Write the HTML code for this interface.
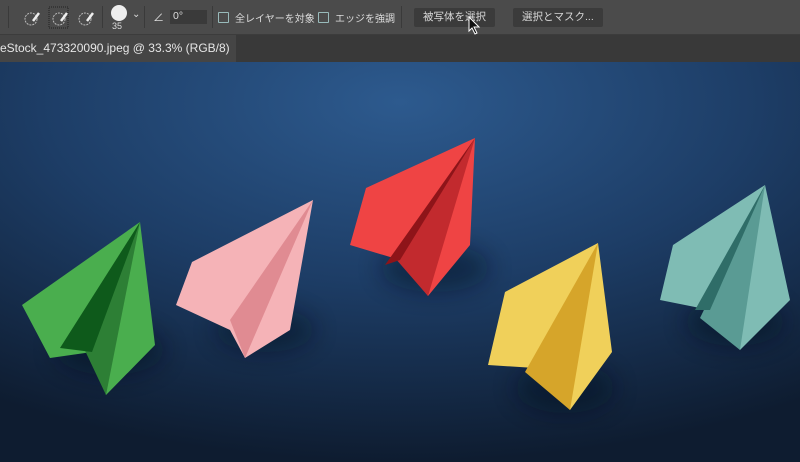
<!DOCTYPE html>
<html><head><meta charset="utf-8"><style>
body{margin:0;width:800px;height:462px;overflow:hidden;background:#383838;font-family:"Liberation Sans","Noto Sans CJK JP",sans-serif;position:relative}
.tb{position:absolute;left:0;top:0;width:800px;height:34px;background:#4b4b4b;border-bottom:1px solid #3c3c3c}
.t{position:absolute;color:#dcdcdc;font-size:10.5px;white-space:nowrap}
.btn{position:absolute;top:8px;height:19px;background:#3b3b3b;color:#d8d8d8;font-size:10.5px;line-height:19px;padding:0 9px;border-radius:2px;white-space:nowrap}
.cb{position:absolute;top:12px;width:9px;height:9px;border:1px solid #9bb;border-radius:1px}
.tabs{position:absolute;top:35px;left:0;width:800px;height:27px;background:#393939}
.tab{position:absolute;left:0;top:0;width:236px;height:27px;background:#454545;color:#e6e6e6;font-size:12px;line-height:27px;white-space:nowrap;overflow:hidden}
.img{position:absolute;top:62px;left:0;width:800px;height:400px}
</style></head><body>
<div class="tb">
<div style="position:absolute;left:8px;top:6px;width:1px;height:22px;background:#3a3a3a"></div>
<svg style="position:absolute;left:20px;top:4px" width="80" height="26"><g fill="none" stroke="#bbb" stroke-width="1" stroke-dasharray="2 1"><circle cx="11" cy="15" r="6"/><circle cx="39" cy="15" r="6"/><circle cx="65" cy="15" r="6"/></g><g stroke="#eee" stroke-width="2.5"><line x1="13" y1="17" x2="19" y2="9"/><line x1="41" y1="17" x2="47" y2="9"/><line x1="67" y1="17" x2="73" y2="9"/></g><rect x="29" y="3" width="19" height="21" fill="none" stroke="#222" stroke-dasharray="1 1"/></svg>
<div style="position:absolute;left:102px;top:6px;width:1px;height:22px;background:#3a3a3a"></div>
<div style="position:absolute;left:111px;top:5px;width:16px;height:16px;border-radius:50%;background:#eee"></div>
<div class="t" style="left:112px;top:21px;font-size:9px">35</div>
<div class="t" style="left:132px;top:9px;font-size:10px">⌄</div>
<div style="position:absolute;left:144px;top:6px;width:1px;height:22px;background:#3a3a3a"></div>
<div class="t" style="left:153px;top:9px;font-size:11px">∠</div>
<div style="position:absolute;left:170px;top:10px;width:37px;height:14px;background:#3a3a3a"></div>
<div class="t" style="left:173px;top:10px">0°</div>
<div style="position:absolute;left:212px;top:6px;width:1px;height:22px;background:#3a3a3a"></div>
<div class="cb" style="left:218px"></div><div class="t" style="left:235px;top:10px;font-size:10px">全レイヤーを対象</div>
<div class="cb" style="left:318px"></div><div class="t" style="left:335px;top:10px;font-size:10px">エッジを強調</div>
<div style="position:absolute;left:401px;top:6px;width:1px;height:22px;background:#3a3a3a"></div>
<div class="btn" style="left:414px">被写体を選択</div>
<div class="btn" style="left:513px">選択とマスク...</div>
<svg style="position:absolute;left:468px;top:16px" width="14" height="20"><path d="M1 1 L1 15 L4 12 L7 18 L9 17 L6 11 L11 11 Z" fill="#111" stroke="#fff" stroke-width="1"/></svg>
</div>
<div class="tabs"><div class="tab">eStock_473320090.jpeg @ 33.3% (RGB/8)</div></div>
<svg class="img" viewBox="0 62 800 400" width="800" height="400">
<defs><radialGradient id="bg" cx="0.5" cy="0.1" r="0.9"><stop offset="0" stop-color="#2d5a8e"/><stop offset="0.5" stop-color="#1d3d66"/><stop offset="1" stop-color="#0e1c30"/></radialGradient>
<filter id="bl"><feGaussianBlur stdDeviation="12"/></filter></defs>
<rect x="0" y="62" width="800" height="400" fill="url(#bg)"/>
<g opacity="0.45" fill="#05101e" filter="url(#bl)"><ellipse cx="110" cy="350" rx="55" ry="25"/><ellipse cx="265" cy="330" rx="50" ry="22"/><ellipse cx="435" cy="268" rx="55" ry="24"/><ellipse cx="565" cy="388" rx="50" ry="25"/><ellipse cx="735" cy="322" rx="50" ry="24"/></g>
<polygon points="140,222 22,305 50,358 92,352 106,395 155,345" fill="#4aae4e"/>
<polygon points="140,222 80,340 106,395" fill="#2d7f35"/>
<polygon points="140,222 60,348 92,352" fill="#0e5a1b"/>
<polygon points="313,200 192,262 176,305 230,330 245,358 290,330" fill="#f5b3b7"/>
<polygon points="313,200 230,320 245,358" fill="#e08b92"/>
<polygon points="475,138 366,188 350,245 400,260 428,296 470,245" fill="#ef4444"/>
<polygon points="475,138 395,258 428,296" fill="#c22a2e"/>
<polygon points="475,138 385,265 400,260" fill="#8e1419"/>
<polygon points="598,243 505,292 488,365 535,368 570,410 612,352" fill="#f0d05a"/>
<polygon points="598,243 525,372 570,410" fill="#d6a52a"/>
<polygon points="765,185 673,245 660,300 710,310 740,350 790,300" fill="#7fbcb4"/>
<polygon points="765,185 700,318 740,350" fill="#5a9b94"/>
<polygon points="765,185 695,310 710,310" fill="#2f6d68"/>
</svg>
</body></html>
